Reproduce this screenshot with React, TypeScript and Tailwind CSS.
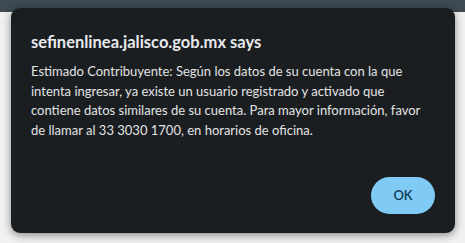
export default function App() {
  return (
    <div className="relative h-[243px] w-[465px] overflow-hidden bg-[#f1f1f1] font-['Lato',sans-serif]">
      <div className="h-[12px] bg-[#3d4a53]" />

      {/* alert dialog */}
      <div className="absolute left-[11px] top-[8px] flex h-[225px] w-[444px] flex-col rounded-[9px] bg-[#1a1e21] px-[20px] pt-[24px] pb-[19px] shadow-[0_2px_8px_rgba(0,0,0,0.45)]">
        <h1 className="text-[16.5px] font-bold leading-[20px] text-[#e8eaed]">
          sefinenlinea.jalisco.gob.mx says
        </h1>
        <p className="mt-[10px] text-[13px] leading-[19.7px] text-[#e3e3e3]">
          Estimado Contribuyente: Según los datos de su cuenta con la que intenta
          ingresar, ya existe un usuario registrado y activado que contiene datos
          similares de su cuenta. Para mayor información, favor de llamar al 33
          3030 1700, en horarios de oficina.
        </p>
        <div className="mt-auto flex justify-end">
          <button className="h-[37px] w-[64px] rounded-full bg-[#7fcbf5] text-[13px] font-semibold text-[#0d3b57]">
            OK
          </button>
        </div>
      </div>
    </div>
  );
}
